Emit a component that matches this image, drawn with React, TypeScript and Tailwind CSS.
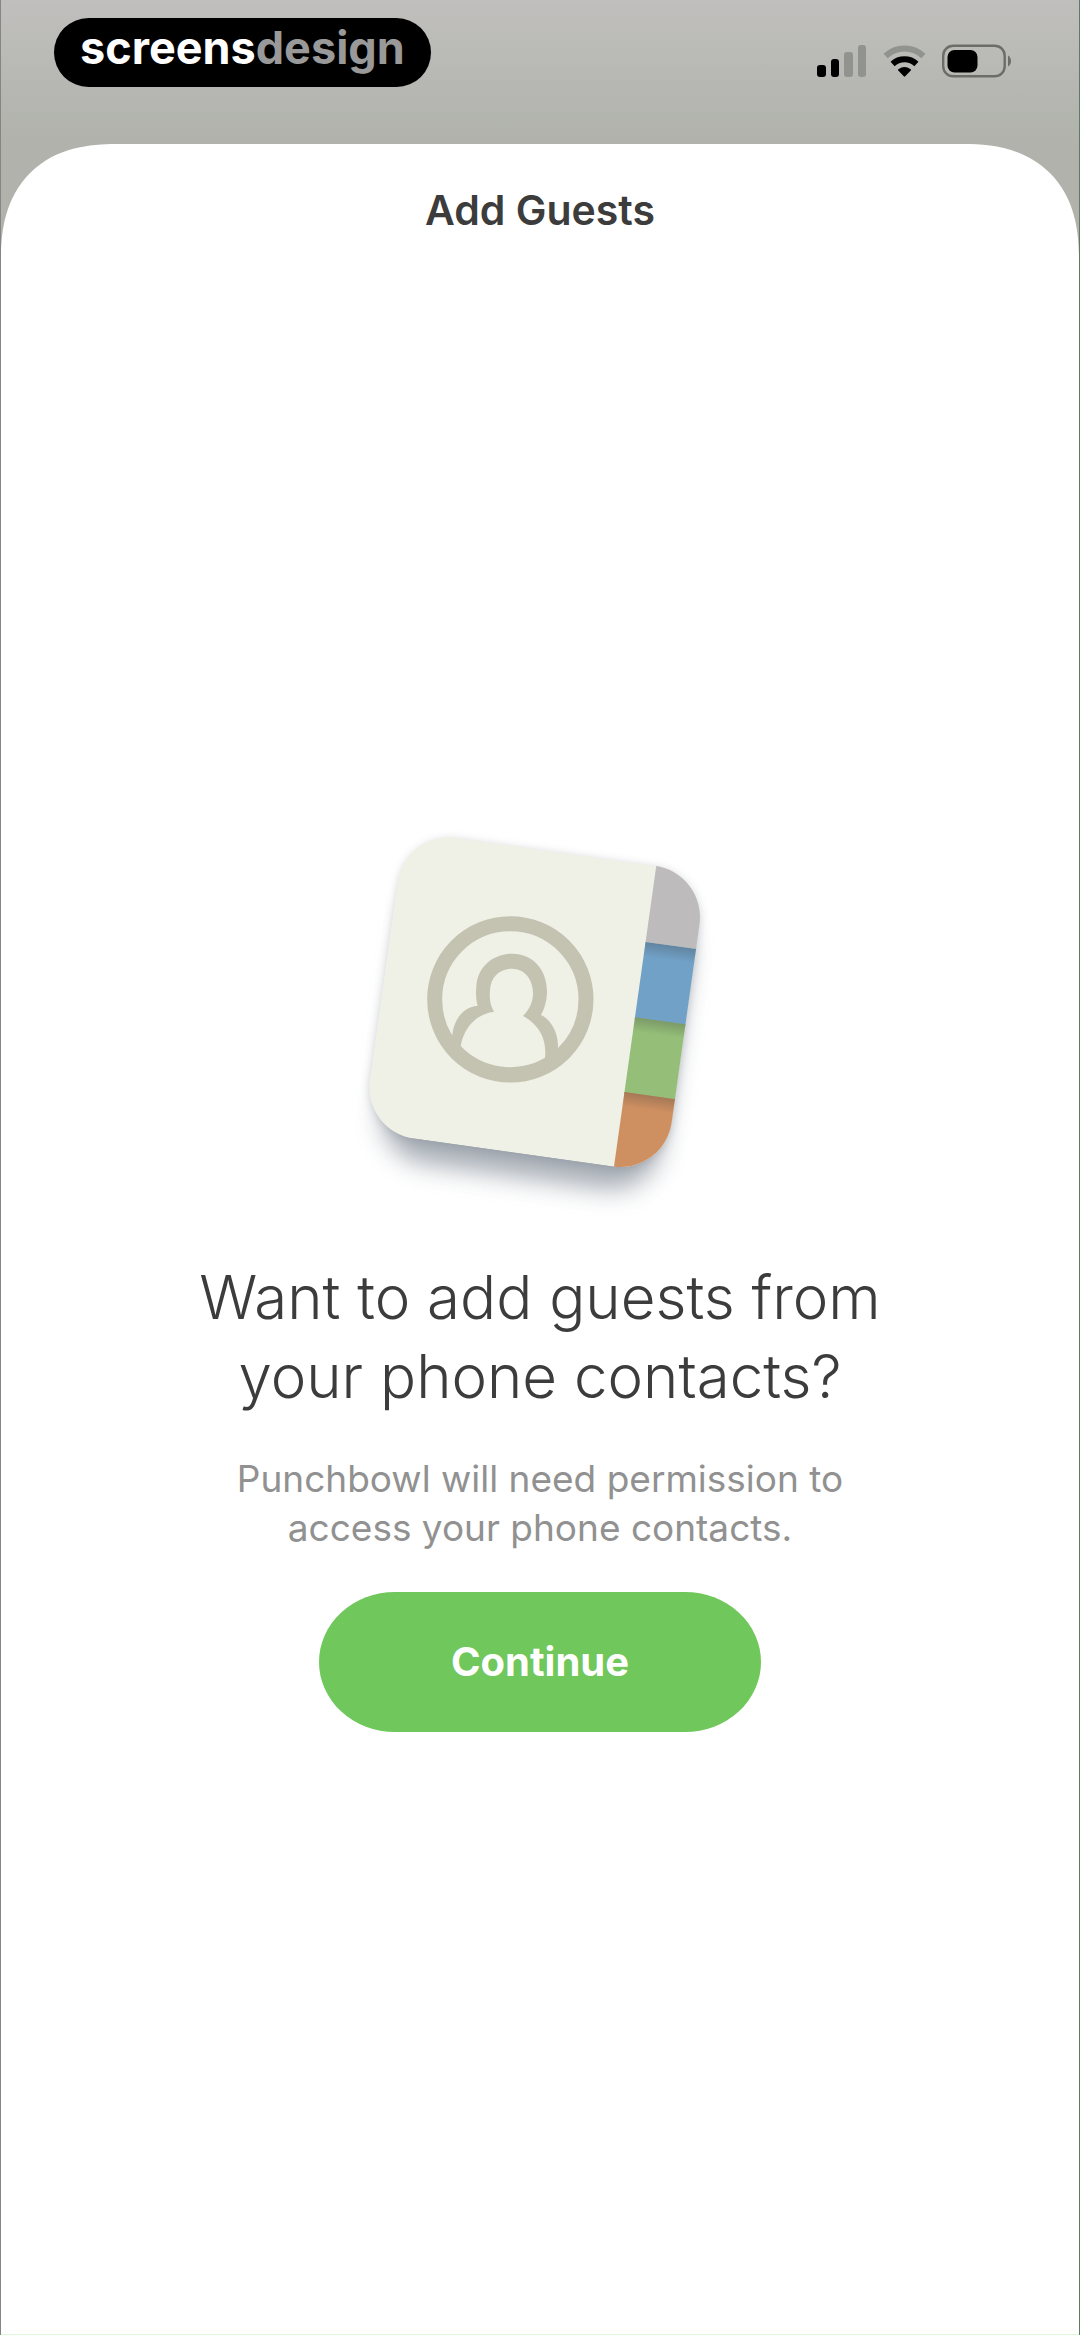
function SignalIcon() {
  return (
    <svg width="50" height="32" viewBox="0 0 50 32" aria-label="Signal strength">
      <rect x="0" y="20" width="9" height="12" rx="3" />
      <rect x="14" y="14" width="8" height="18" rx="3" />
      <rect x="27" y="7" width="9" height="25" rx="3" fill="#91938f" />
      <rect x="41" y="0" width="8" height="32" rx="3" fill="#91938f" />
    </svg>
  );
}

function WifiIcon() {
  return (
    <svg width="43" height="32" viewBox="0 0 43 32" aria-label="Wi-Fi">
      <path d="M2.6 11 A27.5 27.5 0 0 1 40.4 11" fill="none" stroke="#91938f" strokeWidth="6" />
      <path d="M9.6 19 A17.5 17.5 0 0 1 33.4 19" fill="none" stroke="#000" strokeWidth="6" />
      <path d="M15.2 25.4 Q14.6 24.8 15.4 24.2 Q21.5 19.6 27.6 24.2 Q28.4 24.8 27.8 25.4 L22.2 31.3 Q21.5 32 20.8 31.3 Z" />
    </svg>
  );
}

function BatteryIcon() {
  return (
    <svg width="70" height="34" viewBox="0 0 70 34" aria-label="Battery">
      <rect x="1.2" y="1.7" width="61.5" height="30.6" rx="10" fill="none" stroke="#6c6d6a" strokeWidth="2.4" />
      <rect x="5.5" y="6" width="30" height="22.5" rx="7" />
      <path d="M66 11.5 Q69 13.5 69 17 Q69 20.5 66 22.5 Z" fill="#6c6d6a" />
    </svg>
  );
}

const tabs = [
  { y: 66, fill: "#bebbbc" },
  { y: 294, fill: "#71a1c7" },
  { y: 522, fill: "#95bf79" },
  { y: 749, fill: "#cf9061" },
];

function ContactsArtwork() {
  return (
    <svg className="w-100 overflow-visible" viewBox="0 0 1200 1260" aria-hidden="true">
      <defs>
        <clipPath id="card">
          <rect x="205" y="64" width="915" height="911" rx="156" />
        </clipPath>
        <linearGradient id="tabShade" x1="0" y1="0" x2="0" y2="1">
          <stop offset="0" stopColor="#3c3c3c" stopOpacity="0.28" />
          <stop offset="1" stopColor="#3c3c3c" stopOpacity="0" />
        </linearGradient>
        <filter id="wideBlur" x="-20%" y="-20%" width="140%" height="140%">
          <feGaussianBlur stdDeviation="38" />
        </filter>
        <filter id="tightBlur" x="-20%" y="-20%" width="140%" height="140%">
          <feGaussianBlur stdDeviation="14" />
        </filter>
      </defs>

      <g transform="translate(0 60) rotate(8)">
        <rect x="245" y="120" width="845" height="865" rx="150" fill="#76808c" opacity="0.65" filter="url(#wideBlur)" />
      </g>
      <g transform="translate(2 4) rotate(8)">
        <rect x="207" y="66" width="911" height="909" rx="156" fill="#787f88" opacity="0.35" filter="url(#tightBlur)" />
      </g>

      <g transform="rotate(8)">
        <g clipPath="url(#card)">
          <rect x="205" y="64" width="915" height="911" fill="#eff0e6" />
          {tabs.map((tab, index) => (
            <g key={tab.fill}>
              <rect x="967" y={index === 0 ? 60 : tab.y} width="160" height="234" fill={tab.fill} />
              {index > 0 && <rect x="967" y={tab.y} width="160" height="44" fill="url(#tabShade)" />}
            </g>
          ))}
        </g>
      </g>

      <circle cx="511" cy="598" r="227" fill="none" stroke="#c4c3b2" strokeWidth="45" />
      <path
        d="M337 703 C343 655 372 620 413 617 C408 600 407 580 409 560 C412 500 460 461 517 461 C580 461 621 510 621 575 C621 600 614 625 603 645 C635 660 655 700 654 742 L655 770 A227 227 0 0 1 340 735 Z"
        fill="#c4c3b2"
      />
      <path
        d="M362 738 C372 680 412 641 462 635 C450 615 448 595 450 570 C452 530 480 506 516 506 C555 506 579 540 579 580 C579 605 568 630 549 648 C590 670 622 710 615 773 A205 205 0 0 1 362 738 Z"
        fill="#eff0e6"
      />
    </svg>
  );
}

function StatusBar() {
  return (
    <header className="flex h-36 items-start justify-between pl-[53px] pr-[67px]">
      <div className="mt-[18px] flex h-[69px] items-start rounded-full bg-black px-[26px] pt-1 font-['Inter',sans-serif] text-[45px] leading-[52px] font-bold text-white">
        screens<span className="text-[#999]">design</span>
      </div>
      <div className="mt-11 flex items-center gap-4">
        <SignalIcon />
        <WifiIcon />
        <BatteryIcon />
      </div>
    </header>
  );
}

export default function App() {
  return (
    <div className="flex min-h-screen flex-col border-r border-l border-r-[#5c7d64] border-l-[#858585] bg-[#b1b3ad] bg-linear-to-b from-[#c0bfbd] to-[#b0b2ab] to-[144px] font-['Inter',sans-serif]">
      <StatusBar />
      <main className="flex flex-1 flex-col items-center rounded-t-[115px] border-b border-[#dff8d8] bg-white text-center text-[#3c3c3c] [corner-shape:superellipse(1.25)]">
        <h1 className="mt-10 text-[41px] leading-[52px] font-semibold">Add Guests</h1>
        <div className="mt-[564px] flex flex-col items-center">
          <ContactsArtwork />
          <h2 className="mt-[38px] text-[60px] leading-[79px] font-light">
            Want to add guests from
            <br />
            your phone contacts?
          </h2>
          <p className="mt-[38px] text-[37px] leading-[49px] text-[#919191]">
            Punchbowl will need permission to
            <br />
            access your phone contacts.
          </p>
          <button
            type="button"
            className="mt-10 h-[140px] w-[442px] rounded-[76px/70px] bg-[#70c75c] text-[40px] leading-[52px] font-bold text-white"
          >
            Continue
          </button>
        </div>
      </main>
    </div>
  );
}
